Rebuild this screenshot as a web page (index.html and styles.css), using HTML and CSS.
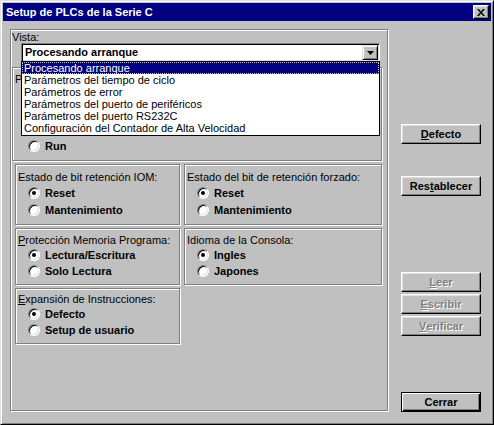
FILE: index.html
```html
<!DOCTYPE html>
<html lang="es">
<head>
<meta charset="utf-8">
<title>Setup de PLCs de la Serie C</title>
<link rel="stylesheet" href="styles.css">
</head>
<body>
<div class="window">
  <div class="titlebar">
    <span class="title">Setup de PLCs de la Serie C</span>
    <span class="close"><svg width="8" height="7" viewBox="0 0 8 7"><path d="M0 0h2l2 2.5L6 0h2L5 3.5 8 7H6L4 4.5 2 7H0l3-3.5z" fill="#000"/></svg></span>
  </div>
  <div class="body">
    <div class="vista">
      <div class="vlabel">Vista:</div>
      <div class="combo-wrap">
        <div class="combo">
          <span class="combo-text">Procesando arranque</span>
          <span class="combo-btn"><svg width="7" height="4" viewBox="0 0 7 4"><path d="M0 0h7L3.5 4z" fill="#000"/></svg></span>
        </div>
        <ul class="droplist">
          <li class="sel">Procesando arranque</li>
          <li>Parámetros del tiempo de ciclo</li>
          <li>Parámetros de error</li>
          <li>Parámetros del puerto de periféricos</li>
          <li>Parámetros del puerto RS232C</li>
          <li>Configuración del Contador de Alta Velocidad</li>
        </ul>
      </div>
      <div class="group run-group">
        <div class="glabel">P</div>
        <div class="run-radios">
          <div class="radio"><span class="circle"></span><span>Run</span></div>
        </div>
      </div>
      <div class="groups">
        <div class="group row1">
          <div class="glabel">Estado de bit retención IOM:</div>
          <div class="radio"><span class="circle on"></span><span>Reset</span></div>
          <div class="radio"><span class="circle"></span><span>Mantenimiento</span></div>
        </div>
        <div class="group row1">
          <div class="glabel">Estado del bit de retención forzado:</div>
          <div class="radio"><span class="circle on"></span><span>Reset</span></div>
          <div class="radio"><span class="circle"></span><span>Mantenimiento</span></div>
        </div>
        <div class="group row2">
          <div class="glabel"><u>P</u>rotección Memoria Programa:</div>
          <div class="radio"><span class="circle on"></span><span>Lectura/Escritura</span></div>
          <div class="radio"><span class="circle"></span><span>Solo Lectura</span></div>
        </div>
        <div class="group row2">
          <div class="glabel">Idioma de la Consola:</div>
          <div class="radio"><span class="circle on"></span><span>Ingles</span></div>
          <div class="radio"><span class="circle"></span><span>Japones</span></div>
        </div>
        <div class="group row3">
          <div class="glabel"><u>E</u>xpansión de Instrucciones:</div>
          <div class="radio"><span class="circle on"></span><span>Defecto</span></div>
          <div class="radio"><span class="circle"></span><span>Setup de usuario</span></div>
        </div>
      </div>
    </div>
    <div class="buttons">
      <div class="btn b-defecto"><u>D</u>efecto</div>
      <div class="btn b-rest">Res<u>t</u>ablecer</div>
      <div class="btn disabled b-leer"><u>L</u>eer</div>
      <div class="btn disabled b-next"><u>E</u>scribir</div>
      <div class="btn disabled b-next"><u>V</u>erificar</div>
      <div class="btn default b-cerrar">Cerrar</div>
    </div>
  </div>
</div>
</body>
</html>
```
FILE: styles.css
```css
* { box-sizing: border-box; }
html, body { margin: 0; padding: 0; }
body {
  width: 494px;
  height: 425px;
  overflow: hidden;
  background: #c0c0c0;
  font-family: "Liberation Sans", Arial, sans-serif;
  font-size: 11px;
  color: #000;
}
.window {
  width: 494px;
  height: 425px;
  background: #c0c0c0;
  border: 1px solid;
  border-color: #dfdfdf #000 #000 #dfdfdf;
  box-shadow: inset 1px 1px 0 #fff, inset -1px -1px 0 #808080;
  padding: 2px;
  display: flex;
  flex-direction: column;
}
.titlebar {
  height: 18px;
  background: #000080;
  color: #fff;
  font-weight: bold;
  display: flex;
  align-items: center;
  justify-content: space-between;
  padding: 0 2px 0 3px;
}
.title { line-height: 13px; }
.close {
  width: 16px;
  height: 14px;
  background: #c0c0c0;
  border: 1px solid;
  border-color: #fff #000 #000 #fff;
  box-shadow: inset -1px -1px 0 #808080, inset 1px 1px 0 #dfdfdf;
  display: flex;
  align-items: center;
  justify-content: center;
}
.close svg { display: block; }
.body {
  display: flex;
  align-items: flex-start;
  gap: 13px;
  padding: 8px 0 0 7px;
}
.vista {
  width: 378px;
  height: 382px;
  border: 1px solid #808080;
  box-shadow: inset 1px 1px 0 #fff, 1px 1px 0 #fff;
  padding: 1px 0 0 1px;
}
.vlabel { line-height: 12px; height: 12px; }
.combo-wrap {
  position: relative;
  margin-left: 9px;
  width: 359px;
}
.combo {
  height: 19px;
  background: #fff;
  border: 1px solid;
  border-color: #808080 #fff #fff #808080;
  box-shadow: inset 1px 1px 0 #000, inset -1px -1px 0 #dfdfdf;
  padding: 1px;
  display: flex;
  align-items: center;
}
.combo-text {
  flex: 1;
  font-weight: bold;
  padding-left: 2px;
  line-height: 13px;
}
.combo-btn {
  width: 16px;
  height: 15px;
  background: #c0c0c0;
  border: 1px solid;
  border-color: #dfdfdf #000 #000 #dfdfdf;
  box-shadow: inset 1px 1px 0 #fff, inset -1px -1px 0 #808080;
  display: flex;
  align-items: center;
  justify-content: center;
}
.combo-btn svg { display: block; }
.droplist {
  position: absolute;
  left: 0;
  top: 18px;
  width: 359px;
  margin: 0;
  padding: 0 0 1px 0;
  list-style: none;
  background: #fff;
  border: 1px solid #000;
  z-index: 5;
}
.droplist li {
  height: 12px;
  line-height: 12px;
  padding-left: 2px;
  white-space: nowrap;
}
.droplist li.sel {
  background: #000080;
  color: #fff;
  outline: 1px dotted #c0c0c0;
  outline-offset: -1px;
}
.group {
  border: 1px solid #808080;
  box-shadow: inset 1px 1px 0 #fff, 1px 1px 0 #fff;
  padding: 5px 0 0 2px;
}
.glabel {
  line-height: 13px;
  height: 13px;
  white-space: nowrap;
}
.run-group {
  margin-top: 5px;
  width: 370px;
  height: 94px;
}
.run-radios { margin-top: 52px; margin-left: 3px; }
.radio {
  display: flex;
  align-items: center;
  height: 16px;
  padding-left: 10px;
  font-weight: bold;
  white-space: nowrap;
}
.row1 .radio { height: 17px; }
.circle {
  position: relative;
  width: 12px;
  height: 12px;
  border-radius: 50%;
  background: #fff;
  border: 1px solid;
  border-color: #808080 #fff #fff #808080;
  box-shadow: inset 1px 1px 0 #000, inset -1px -1px 0 #dfdfdf;
  margin-right: 5px;
  flex: none;
}
.circle.on::after {
  content: "";
  position: absolute;
  left: 3px;
  top: 3px;
  width: 4px;
  height: 4px;
  border-radius: 50%;
  background: #000;
}
.groups {
  display: grid;
  grid-template-columns: 165px 198px;
  grid-template-rows: 61px 57px 56px;
  column-gap: 4px;
  row-gap: 3px;
  margin: 3px 0 0 3px;
}
.row1 { padding-top: 6px; }
.row3 { padding-top: 4px; }
.buttons {
  display: flex;
  flex-direction: column;
  width: 80px;
}
.btn {
  height: 20px;
  width: 80px;
  background: #c0c0c0;
  border: 1px solid;
  border-color: #fff #000 #000 #fff;
  box-shadow: inset -1px -1px 0 #808080, inset 1px 1px 0 #dfdfdf;
  font-weight: bold;
  display: flex;
  align-items: center;
  justify-content: center;
  line-height: 13px;
}
.btn.disabled {
  color: #808080;
  text-shadow: 1px 1px 0 #fff;
}
.btn.default {
  border: 1px solid #000;
  box-shadow: inset 1px 1px 0 #fff, inset -1px -1px 0 #000, inset -2px -2px 0 #808080;
}
.b-defecto { margin-top: 95px; }
.b-rest { margin-top: 32px; }
.b-leer { margin-top: 76px; }
.b-next { margin-top: 2px; }
.b-cerrar { margin-top: 56px; }
```
